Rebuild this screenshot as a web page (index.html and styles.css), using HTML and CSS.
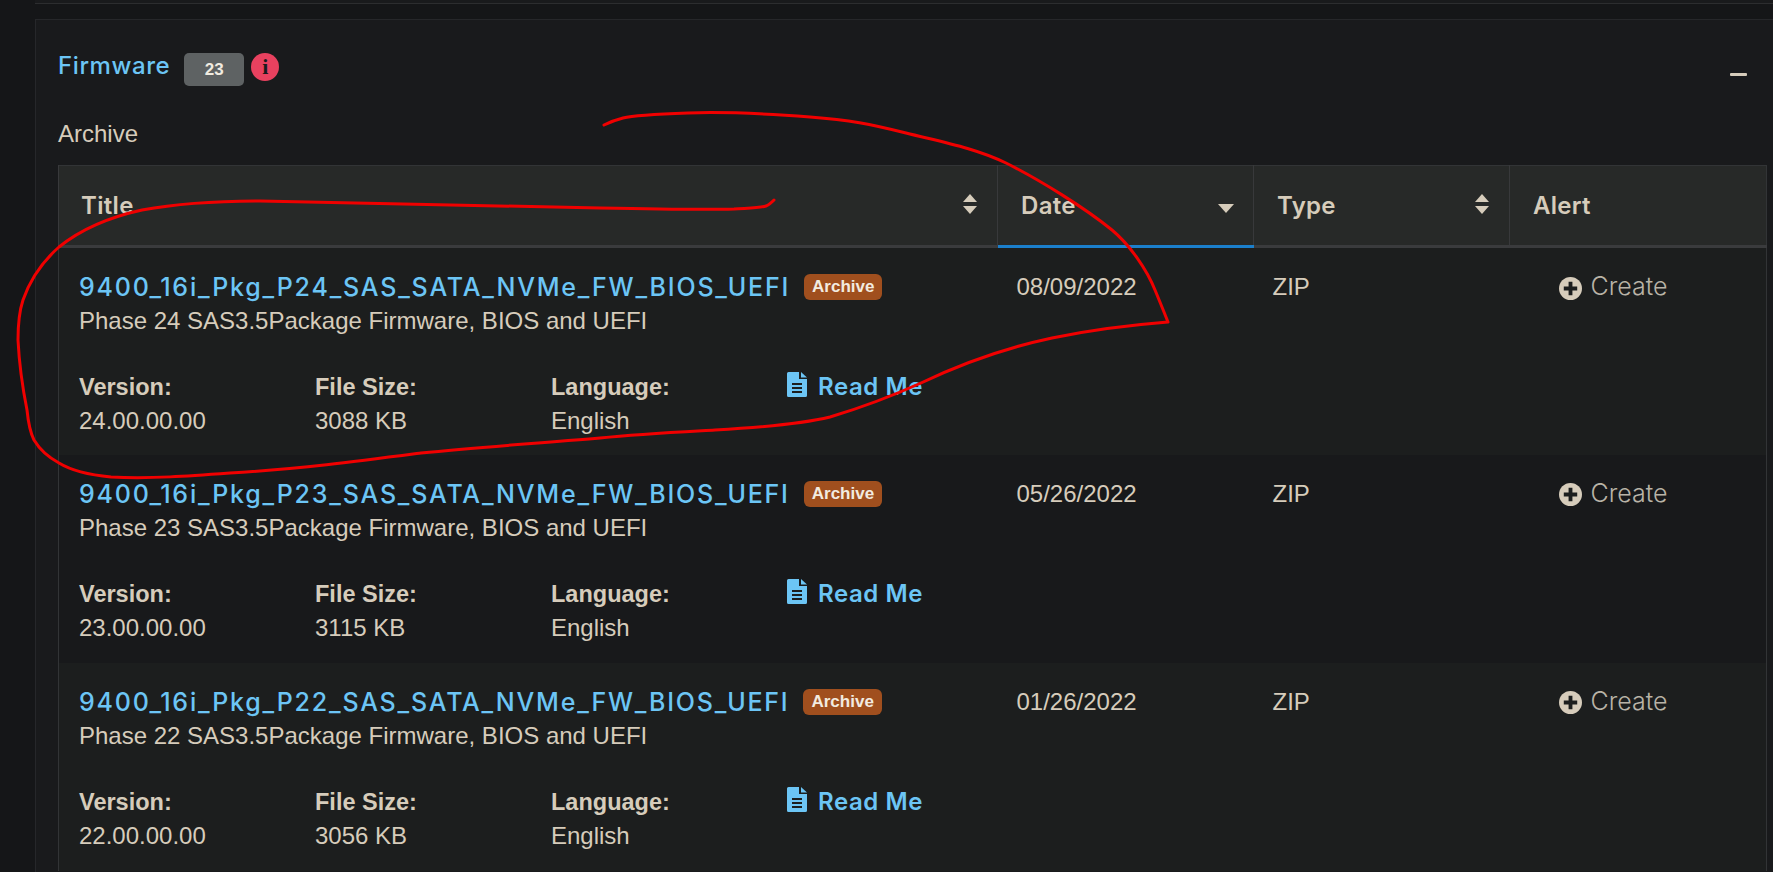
FILE: index.html
```html
<!DOCTYPE html>
<html lang="en">
<head>
    <meta charset="UTF-8">
    <meta name="viewport" content="width=device-width, initial-scale=1.0">
    <title>Firmware Downloads</title>
    <link rel="stylesheet" href="styles.css">
</head>
<body>

    <div class="prev-panel"></div>

    <section class="panel">
        <div class="panel-head">
            <h2 class="panel-title">Firmware</h2>
            <span class="count">23</span>
            <span class="info-dot">i</span>
            <span class="collapse"></span>
        </div>
        <p class="group-label">Archive</p>

        <table class="downloads">
            <thead>
                <tr>
                    <th class="col-title">
                        <div class="th-inner">Title
                            <svg class="sort" viewBox="0 0 16 22"><path d="M8 1l7 8H1zM1 13h14l-7 8z"/></svg>
                        </div>
                    </th>
                    <th class="col-date active">
                        <div class="th-inner">Date
                            <svg class="sort-down" viewBox="0 0 16 9"><path d="M0 0h16L8 9z"/></svg>
                        </div>
                    </th>
                    <th class="col-type">
                        <div class="th-inner">Type
                            <svg class="sort" viewBox="0 0 16 22"><path d="M8 1l7 8H1zM1 13h14l-7 8z"/></svg>
                        </div>
                    </th>
                    <th class="col-alert"><div class="th-inner">Alert</div></th>
                </tr>
            </thead>
            <tbody>
                <tr>
                    <td>
                        <div class="file-line">
                            <a class="file-name">9400_16i_Pkg_P24_SAS_SATA_NVMe_FW_BIOS_UEFI</a>
                            <span class="tag">Archive</span>
                        </div>
                        <p class="file-desc">Phase 24 SAS3.5Package Firmware, BIOS and UEFI</p>
                        <div class="meta">
                            <div class="meta-item"><b>Version:</b><span>24.00.00.00</span></div>
                            <div class="meta-item"><b>File Size:</b><span>3088 KB</span></div>
                            <div class="meta-item"><b>Language:</b><span>English</span></div>
                            <a class="readme">
                                <svg class="doc" viewBox="0 0 20 25"><path d="M0 1.5A1.5 1.5 0 0 1 1.500 0H12v7h8v16.500a1.500 1.500 0 0 1-1.500 1.500h-17A1.500 1.500 0 0 1 0 23.500z"/><path d="M14 0l6 5.500h-6z"/><path class="doc-lines" d="M5 11h10v2H5zM5 15h10v2H5zM5 19h10v2H5z"/></svg>
                                Read Me
                            </a>
                        </div>
                    </td>
                    <td class="cell">08/09/2022</td>
                    <td class="cell">ZIP</td>
                    <td class="cell cell-alert">
                        <span class="create">
                            <svg class="plus" viewBox="0 0 24 24"><circle cx="12" cy="12" r="12"/><path class="plus-bar" d="M10 5h4v5h5v4h-5v5h-4v-5H5v-4h5z"/></svg>
                            Create
                        </span>
                    </td>
                </tr>
                <tr>
                    <td>
                        <div class="file-line">
                            <a class="file-name">9400_16i_Pkg_P23_SAS_SATA_NVMe_FW_BIOS_UEFI</a>
                            <span class="tag">Archive</span>
                        </div>
                        <p class="file-desc">Phase 23 SAS3.5Package Firmware, BIOS and UEFI</p>
                        <div class="meta">
                            <div class="meta-item"><b>Version:</b><span>23.00.00.00</span></div>
                            <div class="meta-item"><b>File Size:</b><span>3115 KB</span></div>
                            <div class="meta-item"><b>Language:</b><span>English</span></div>
                            <a class="readme">
                                <svg class="doc" viewBox="0 0 20 25"><path d="M0 1.5A1.5 1.5 0 0 1 1.500 0H12v7h8v16.500a1.500 1.500 0 0 1-1.500 1.500h-17A1.500 1.500 0 0 1 0 23.500z"/><path d="M14 0l6 5.500h-6z"/><path class="doc-lines" d="M5 11h10v2H5zM5 15h10v2H5zM5 19h10v2H5z"/></svg>
                                Read Me
                            </a>
                        </div>
                    </td>
                    <td class="cell">05/26/2022</td>
                    <td class="cell">ZIP</td>
                    <td class="cell cell-alert">
                        <span class="create">
                            <svg class="plus" viewBox="0 0 24 24"><circle cx="12" cy="12" r="12"/><path class="plus-bar" d="M10 5h4v5h5v4h-5v5h-4v-5H5v-4h5z"/></svg>
                            Create
                        </span>
                    </td>
                </tr>
                <tr>
                    <td>
                        <div class="file-line">
                            <a class="file-name">9400_16i_Pkg_P22_SAS_SATA_NVMe_FW_BIOS_UEFI</a>
                            <span class="tag">Archive</span>
                        </div>
                        <p class="file-desc">Phase 22 SAS3.5Package Firmware, BIOS and UEFI</p>
                        <div class="meta">
                            <div class="meta-item"><b>Version:</b><span>22.00.00.00</span></div>
                            <div class="meta-item"><b>File Size:</b><span>3056 KB</span></div>
                            <div class="meta-item"><b>Language:</b><span>English</span></div>
                            <a class="readme">
                                <svg class="doc" viewBox="0 0 20 25"><path d="M0 1.5A1.5 1.5 0 0 1 1.500 0H12v7h8v16.500a1.500 1.500 0 0 1-1.500 1.500h-17A1.500 1.500 0 0 1 0 23.500z"/><path d="M14 0l6 5.500h-6z"/><path class="doc-lines" d="M5 11h10v2H5zM5 15h10v2H5zM5 19h10v2H5z"/></svg>
                                Read Me
                            </a>
                        </div>
                    </td>
                    <td class="cell">01/26/2022</td>
                    <td class="cell">ZIP</td>
                    <td class="cell cell-alert">
                        <span class="create">
                            <svg class="plus" viewBox="0 0 24 24"><circle cx="12" cy="12" r="12"/><path class="plus-bar" d="M10 5h4v5h5v4h-5v5h-4v-5H5v-4h5z"/></svg>
                            Create
                        </span>
                    </td>
                </tr>
            </tbody>
        </table>
    </section>

    <!-- hand drawn red marker on top of the screenshot -->
    <svg class="scribble" viewBox="0 0 1773 872">
        <path d="M604 125C610 122 615 120 623 118S660 114 688 113S770 114 810 117S870 124 906 133S975 148 1006 163C1040 180 1085 208 1112 230C1130 245 1147 270 1155 290C1160 302 1164 312 1168 322C1130 325 1090 330 1052 338C1005 348 965 362 921 383C890 397 860 408 830 417C805 423 770 427 715 430C680 432 640 434 600 438C540 443 480 447 421 453C360 461 300 469 230 473C190 476 150 479 111 477C90 475 72 471 59 463C48 457 40 450 34 440C30 432 28 420 27 410C22 385 19 360 18 340C18 325 19 312 23 300C30 280 42 262 59 247C80 230 110 217 142 210C180 203 220 201 260 201C370 203 480 206 600 208C650 209 700 210 734 209C750 208 760 208 766 206C769 205 771 203 774 200"/>
    </svg>

</body>
</html>
```

FILE: styles.css
```css
body {
    margin: 0;
    height: 100vh;
    overflow: hidden;
    position: relative;
    background: #151618;
    color: #d6ccbb;
    font-family: 'Liberation Sans', Arial, sans-serif;
    font-size: 24px;
}
.prev-panel {
    height: 3px;
    margin-left: 35px;
    border-bottom: 1px solid #2c2d2f;
    background: #191a1c;
}
.panel {
    box-sizing: border-box;
    margin: 15px 0 0 35px;
    padding: 33px 0 0 22px;
    height: 853px;
    overflow: hidden;
    border-top: 1px solid #26272a;
    border-left: 1px solid #26272a;
    background: #191a1c;
}
.panel-head {
    display: flex;
    align-items: center;
    height: 33px;
    padding-right: 26px;
}
.panel-title {
    margin: -8px 14px 0 0;
    font-family: Inter, sans-serif;
    font-size: 24px;
    font-weight: 500;
    letter-spacing: 0.6px;
    color: #6cc5f5;
}
.count {
    width: 60px;
    height: 33px;
    line-height: 33px;
    text-align: center;
    background: #5e6263;
    border-radius: 5px;
    font-size: 17px;
    font-weight: bold;
    color: #f0ebe0;
}
.info-dot {
    width: 28px;
    height: 28px;
    line-height: 28px;
    margin: -5px 0 0 7px;
    border-radius: 50%;
    text-align: center;
    background: #e8415f;
    color: #191a1c;
    font-family: 'Liberation Serif', serif;
    font-size: 22px;
    font-weight: bold;
}
.collapse {
    width: 17px;
    height: 3px;
    margin: 10px 0 0 auto;
    background: #d6ccbb;
    border-radius: 1px;
}
.group-label {
    margin: 0;
    padding-top: 33px;
    height: 46px;
    line-height: 30px;
}
.downloads {
    width: 1708px;
    table-layout: fixed;
    border-collapse: collapse;
    border: 1px solid #323436;
    border-bottom: 0;
}
.downloads th {
    height: 79px;
    padding: 0;
    text-align: left;
    background: #272928;
    border-bottom: 3px solid #3a3b3d;
    border-left: 1px solid #38393b;
    font-family: Inter, sans-serif;
    font-size: 24px;
    font-weight: 600;
    letter-spacing: 0.3px;
    vertical-align: middle;
}
.downloads th.active { border-bottom-color: #1b7fcc; }
.col-title { width: 938px; }
.col-date, .col-type { width: 255px; }
.col-alert { width: 256px; }
.th-inner {
    display: flex;
    align-items: center;
    justify-content: space-between;
    padding: 0 19px 0 23px;
}
.col-title .th-inner { padding-left: 22px; }
.sort { width: 16px; height: 22px; margin-top: -3px; fill: #d6ccbb; }
.sort-down { width: 16px; height: 9px; margin-top: 6px; fill: #d6ccbb; }

.downloads td {
    height: 208px;
    padding: 0;
    vertical-align: top;
    box-sizing: border-box;
}
.downloads tbody tr:nth-child(odd) { background: #1c1e1e; }
.downloads tbody tr:nth-child(even) { background: #18191b; }
.downloads td:first-child { padding: 24px 0 0 20px; }
.cell { padding: 24px 0 0 19px !important; line-height: 30px; }
.cell-alert { padding-left: 49px !important; line-height: 28px; }

.file-line {
    display: flex;
    align-items: center;
    height: 30px;
}
.file-name {
    font-family: Inter, sans-serif;
    font-size: 25px;
    font-weight: 500;
    letter-spacing: 1.8px;
    color: #6cc5f5;
    white-space: nowrap;
}
.tag {
    margin-left: 14px;
    padding: 0 8px;
    height: 26px;
    line-height: 26px;
    background: #a04f1e;
    border-radius: 6px;
    font-size: 17px;
    font-weight: bold;
    color: #f2ebe0;
}
.file-desc {
    margin: 4px 0 0;
    line-height: 30px;
}
.meta {
    display: flex;
    margin-top: 36px;
}
.meta-item {
    width: 236px;
    display: flex;
    flex-direction: column;
    line-height: 30px;
    gap: 4px;
}
.meta-item b { font-size: 23.500px; font-weight: bold; }
.readme {
    display: flex;
    align-items: flex-start;
    gap: 11px;
    height: 30px;
    line-height: 30px;
    font-family: Inter, sans-serif;
    font-size: 24px;
    font-weight: 600;
    letter-spacing: 0.6px;
    color: #6cc5f5;
}
.doc { width: 20px; height: 25px; fill: #6cc5f5; }
.doc-lines { fill: #1c1e1e; }
.create {
    display: inline-flex;
    align-items: center;
    gap: 9px;
    color: #b9b3a7;
    font-family: Inter, sans-serif;
    font-size: 25px;
    font-weight: 300;
}
.plus { width: 23px; height: 23px; margin-top: 4px; fill: #d6ccbb; }
.plus-bar { fill: #1c1e1e; }

.scribble {
    position: absolute;
    top: 0;
    left: 0;
    width: 1773px;
    height: 872px;
    pointer-events: none;
}
.scribble path {
    fill: none;
    stroke: #f00000;
    stroke-width: 3;
    stroke-linecap: round;
    stroke-linejoin: round;
}
```
